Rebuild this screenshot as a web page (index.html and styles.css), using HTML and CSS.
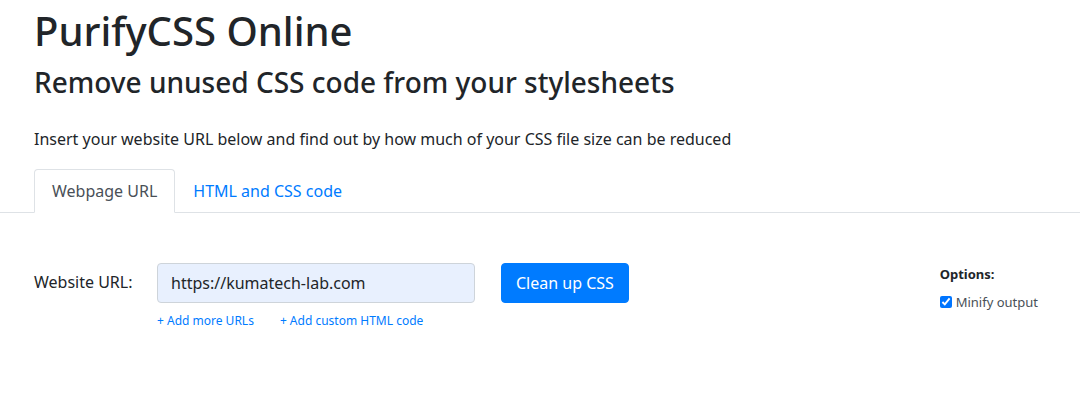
FILE: index.html
```html
<!DOCTYPE html>
<html lang="en">

<head>
    <meta charset="UTF-8">
    <meta name="viewport" content="width=device-width, initial-scale=1.0">
    <title>PurifyCSS Online</title>
    <link rel="stylesheet" href="styles.css">
</head>

<body>
    <div class="header">
        <h1>PurifyCSS Online</h1>
        <h3>Remove unused CSS code from your stylesheets</h3>
        <p class="lead-text">Insert your website URL below and find out by how much of your CSS file size can be reduced</p>
    </div>

    <ul class="tabs">
        <li class="tab active">Webpage URL</li>
        <li class="tab"><a href="#code">HTML and CSS code</a></li>
    </ul>

    <form class="url-form" onsubmit="return false;">
        <label class="url-label" for="url">Website URL:</label>
        <div class="url-field">
            <input type="text" id="url" value="https://kumatech-lab.com">
            <div class="extra-links">
                <a href="#urls">+ Add more URLs</a>
                <a href="#html">+ Add custom HTML code</a>
            </div>
        </div>
        <button type="submit" class="btn-clean">Clean up CSS</button>
        <div class="options">
            <div class="options-title">Options:</div>
            <label class="option"><input type="checkbox" checked> Minify output</label>
        </div>
    </form>
</body>
</html>
```

FILE: styles.css
```css
body {
    font-family: "Noto Sans", "Open Sans", sans-serif;
    color: #212529;
    margin: 0;
    background: #fff;
}

a {
    color: #007bff;
    text-decoration: none;
}

.header {
    padding: 0 34px;
}

.header h1 {
    font-size: 40px;
    font-weight: 500;
    margin: 7px 0 0;
    line-height: 1.2;
}

.header h3 {
    font-size: 28px;
    font-weight: 500;
    margin: 11px 0 0;
    line-height: 1.2;
}

.lead-text {
    font-size: 16px;
    margin: 27px 0 0;
    line-height: 1.5;
}

.tabs {
    list-style: none;
    display: flex;
    margin: 18px 0 0;
    padding: 0 34px;
    border-bottom: 1px solid #dee2e6;
}

.tab {
    font-size: 16px;
    padding: 9px 17px;
    line-height: 1.5;
    margin-bottom: -1px;
    border: 1px solid transparent;
    border-radius: 4px 4px 0 0;
}

.tab.active {
    color: #495057;
    border-color: #dee2e6 #dee2e6 #fff;
}

.url-form {
    display: flex;
    align-items: flex-start;
    padding: 50px 34px 0;
}

.url-label {
    font-size: 16px;
    width: 123px;
    padding-top: 8px;
}

.url-field {
    width: 318px;
}

.url-field input {
    width: 100%;
    box-sizing: border-box;
    height: 40px;
    font-family: inherit;
    font-size: 16px;
    color: #212529;
    padding: 6px 13px;
    background: #e8f0fe;
    border: 1px solid #ced4da;
    border-radius: 4px;
}

.extra-links {
    display: flex;
    gap: 26px;
    font-size: 12px;
    margin-top: 9px;
}

.btn-clean {
    margin-left: 26px;
    height: 40px;
    padding: 0 14px;
    font-family: inherit;
    font-size: 16px;
    color: #fff;
    background: #007bff;
    border: 1px solid #007bff;
    border-radius: 4px;
}

.options {
    margin-left: auto;
    margin-right: 8px;
    padding-top: 2px;
    font-size: 13px;
}

.options-title {
    font-weight: 700;
    margin-bottom: 10px;
}

.option {
    display: flex;
    align-items: center;
    gap: 4px;
    color: #495057;
}

.option input {
    margin: 0;
    width: 12px;
    height: 12px;
}
```
